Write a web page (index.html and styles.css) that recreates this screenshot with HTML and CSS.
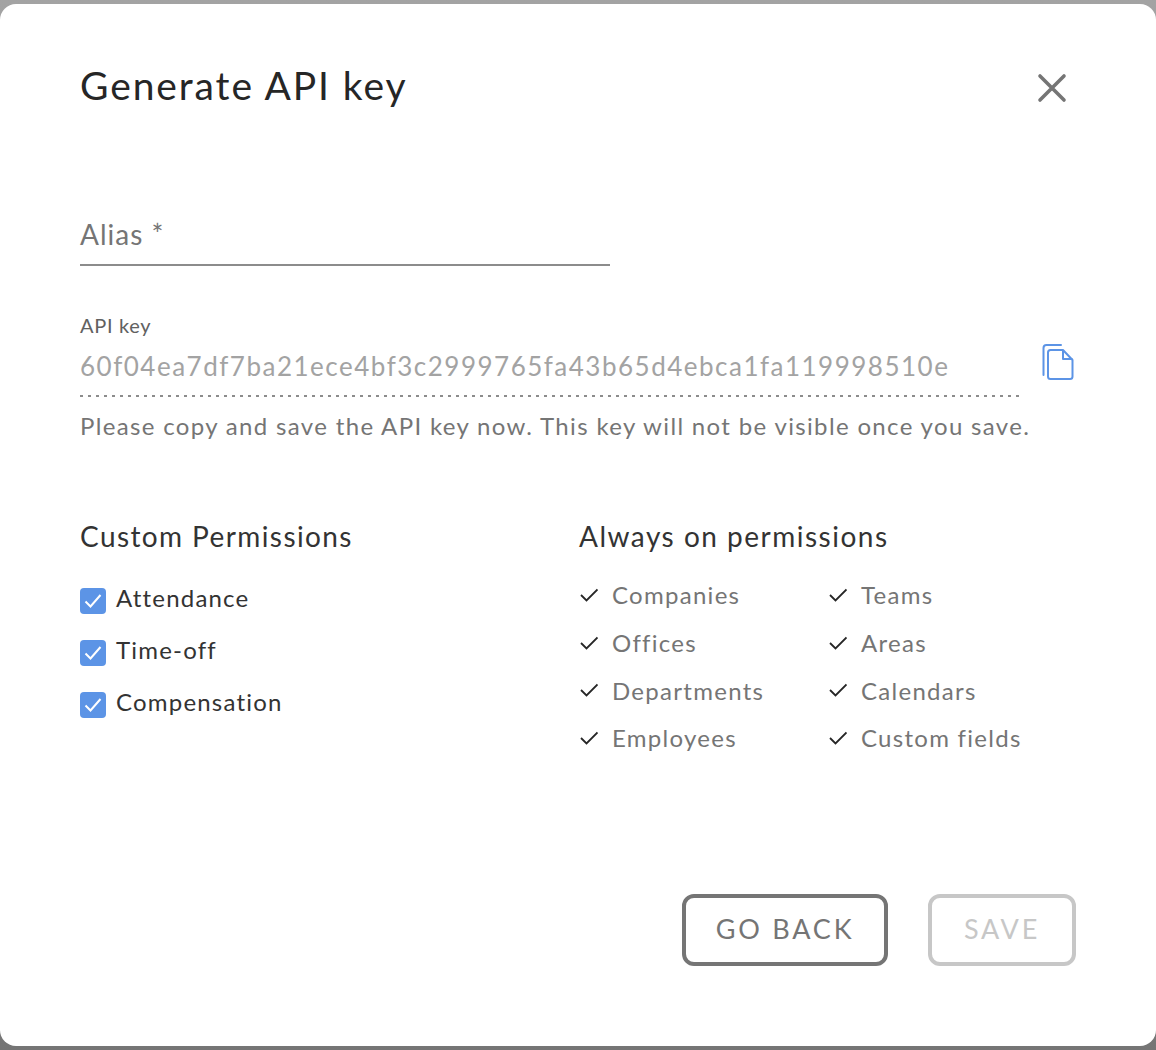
FILE: index.html
```html
<!DOCTYPE html>
<html>
<head>
	<title>Generate API key</title>
	<meta charset="utf-8"/>
	<link rel="stylesheet" href="styles.css">
</head>
<body>

<div class="dialog">
	<div class="dialog-head">
		<h1>Generate API key</h1>
		<button class="close" aria-label="Close">
			<svg width="30" height="30" viewBox="0 0 30 30"><path d="M3 3 L27 27 M27 3 L3 27" fill="none" stroke="#757575" stroke-width="3.600" stroke-linecap="round"/></svg>
		</button>
	</div>

	<div class="alias">Alias *</div>

	<div class="key-row">
		<div class="key-field">
			<div class="key-label">API key</div>
			<div class="key-value">60f04ea7df7ba21ece4bf3c2999765fa43b65d4ebca1fa119998510e</div>
		</div>
		<svg class="copy" width="34" height="38" viewBox="0 0 34 38">
			<path d="M2.500 31 V4 Q2.500 1 5.500 1 H20" fill="none" stroke="#5c94e6" stroke-width="2" stroke-linecap="round"/>
			<path d="M7 8.500 Q7 6 9.500 6 H22 L31.500 16 V32.500 Q31.500 35 29 35 H9.500 Q7 35 7 32.500 Z" fill="none" stroke="#5c94e6" stroke-width="2" stroke-linejoin="round"/>
			<path d="M22 6 V15 H31.500" fill="none" stroke="#5c94e6" stroke-width="2" stroke-linejoin="round"/>
		</svg>
	</div>
	<p class="key-help">Please copy and save the API key now. This key will not be visible once you save.</p>

	<div class="permissions">
		<div class="custom">
			<h2>Custom Permissions</h2>
			<label class="check"><span class="box"><svg width="18" height="16" viewBox="0 0 18 16"><path d="M1.500 8.500 L6.500 13.500 L16.500 2" fill="none" stroke="#fff" stroke-width="2"/></svg></span>Attendance</label>
			<label class="check"><span class="box"><svg width="18" height="16" viewBox="0 0 18 16"><path d="M1.500 8.500 L6.500 13.500 L16.500 2" fill="none" stroke="#fff" stroke-width="2"/></svg></span>Time-off</label>
			<label class="check"><span class="box"><svg width="18" height="16" viewBox="0 0 18 16"><path d="M1.500 8.500 L6.500 13.500 L16.500 2" fill="none" stroke="#fff" stroke-width="2"/></svg></span>Compensation</label>
		</div>
		<div class="always">
			<h2>Always on permissions</h2>
			<ul class="always-list">
				<li><svg width="18" height="14" viewBox="0 0 18 14"><path d="M1 7 L6.500 12.500 L17.500 1.500" fill="none" stroke="#262626" stroke-width="1.800"/></svg>Companies</li>
				<li><svg width="18" height="14" viewBox="0 0 18 14"><path d="M1 7 L6.500 12.500 L17.500 1.500" fill="none" stroke="#262626" stroke-width="1.800"/></svg>Teams</li>
				<li><svg width="18" height="14" viewBox="0 0 18 14"><path d="M1 7 L6.500 12.500 L17.500 1.500" fill="none" stroke="#262626" stroke-width="1.800"/></svg>Offices</li>
				<li><svg width="18" height="14" viewBox="0 0 18 14"><path d="M1 7 L6.500 12.500 L17.500 1.500" fill="none" stroke="#262626" stroke-width="1.800"/></svg>Areas</li>
				<li><svg width="18" height="14" viewBox="0 0 18 14"><path d="M1 7 L6.500 12.500 L17.500 1.500" fill="none" stroke="#262626" stroke-width="1.800"/></svg>Departments</li>
				<li><svg width="18" height="14" viewBox="0 0 18 14"><path d="M1 7 L6.500 12.500 L17.500 1.500" fill="none" stroke="#262626" stroke-width="1.800"/></svg>Calendars</li>
				<li><svg width="18" height="14" viewBox="0 0 18 14"><path d="M1 7 L6.500 12.500 L17.500 1.500" fill="none" stroke="#262626" stroke-width="1.800"/></svg>Employees</li>
				<li><svg width="18" height="14" viewBox="0 0 18 14"><path d="M1 7 L6.500 12.500 L17.500 1.500" fill="none" stroke="#262626" stroke-width="1.800"/></svg>Custom fields</li>
			</ul>
		</div>
	</div>

	<div class="actions">
		<button class="btn btn-back">GO BACK</button>
		<button class="btn btn-save">SAVE</button>
	</div>
</div>

</body>
</html>
```

FILE: styles.css
```css
* {
	box-sizing: border-box;
}

html, body {
	height: 100%;
}

body {
	margin: 0;
	padding: 4px 0;
	background: linear-gradient(180deg, #a3a3a3 0%, #757575 100%);
	color: #262626;
	font-family: Lato, "Noto Sans", sans-serif;
	overflow: hidden;
}

.dialog {
	display: flex;
	flex-direction: column;
	height: 1042px;
	padding: 0 80px;
	background: white;
	border-radius: 16px;
}

.dialog-head {
	display: flex;
	justify-content: space-between;
	align-items: center;
	height: 166px;
	padding-bottom: 1px;
}

h1 {
	margin: 0 0 4px;
	font-size: 39px;
	font-weight: 400;
	letter-spacing: 1.9px;
	color: #262626;
}

.close {
	display: flex;
	margin: 2px 9px 0 0;
	padding: 0;
	border: 0;
	background: none;
}

.alias {
	width: 530px;
	height: 96px;
	padding-top: 45px;
	border-bottom: 2px solid #8c8c8c;
	font-size: 28px;
	letter-spacing: 1px;
	line-height: 39px;
	color: #757575;
}

.key-row {
	display: flex;
	justify-content: space-between;
	align-items: flex-start;
	margin-top: 47px;
}

.key-field {
	width: 940px;
	padding-bottom: 13px;
	background: linear-gradient(90deg, #8c8c8c 3px, transparent 3px) left bottom / 8px 2px repeat-x;
}

.key-label {
	font-size: 20px;
	letter-spacing: 0.7px;
	line-height: 24px;
	color: #616161;
}

.key-value {
	margin-top: 11px;
	font-size: 26px;
	letter-spacing: 1.5px;
	line-height: 36px;
	color: #a3a3a3;
}

.copy {
	margin: 31px 1px 0 0;
}

.key-help {
	margin: 13px 0 0;
	font-size: 24px;
	letter-spacing: 1.34px;
	line-height: 32px;
	color: #757575;
	white-space: nowrap;
}

.permissions {
	display: flex;
	margin-top: 76px;
}

.custom {
	width: 499px;
}

h2 {
	margin: 0;
	font-size: 28px;
	font-weight: 400;
	letter-spacing: 1.4px;
	line-height: 36px;
	color: #333333;
}

.always h2 {
	letter-spacing: 1.5px;
}

.check {
	display: flex;
	align-items: center;
	gap: 10px;
	height: 52px;
	font-size: 24px;
	letter-spacing: 1.2px;
	color: #333333;
}

.custom h2 {
	margin-bottom: 17px;
}

.box {
	display: flex;
	justify-content: center;
	align-items: center;
	width: 26px;
	height: 26px;
	margin-top: 8px;
	border-radius: 4px;
	background: #5c94e6;
}

.always-list {
	display: grid;
	grid-template-columns: 249px 1fr;
	margin: 17px 0 0;
	padding: 0;
	list-style: none;
}

.always-list li {
	display: flex;
	align-items: center;
	gap: 14px;
	height: 47.7px;
	font-size: 24px;
	letter-spacing: 1.28px;
	color: #757575;
}

.always-list svg {
	margin-left: 1px;
}

.actions {
	display: flex;
	justify-content: flex-end;
	gap: 40px;
	margin-top: auto;
	margin-bottom: 80px;
}

.btn {
	height: 72px;
	padding-bottom: 4px;
	border-radius: 12px;
	background: white;
	font-family: inherit;
	font-size: 27px;
	letter-spacing: 2.8px;
}

.btn-back {
	width: 206px;
	border: 4px solid #757575;
	color: #757575;
}

.btn-save {
	width: 148px;
	border: 4px solid #c7c7c7;
	color: #c7c7c7;
}
```
